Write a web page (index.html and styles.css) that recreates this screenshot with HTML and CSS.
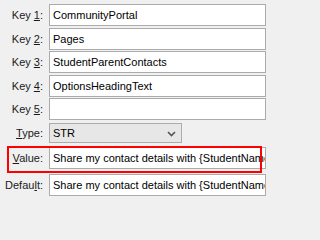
FILE: index.html
```html
<!DOCTYPE html>
<html>
<head>
<meta charset="utf-8">
<link rel="stylesheet" href="styles.css">
</head>
<body>
<div class="form">
  <div class="row r1"><label class="lbl">Key <u>1</u>:</label><div class="field">CommunityPortal</div></div>
  <div class="row"><label class="lbl">Key <u>2</u>:</label><div class="field">Pages</div></div>
  <div class="row"><label class="lbl">Key <u>3</u>:</label><div class="field">StudentParentContacts</div></div>
  <div class="row"><label class="lbl">Key <u>4</u>:</label><div class="field">OptionsHeadingText</div></div>
  <div class="row"><label class="lbl">Key <u>5</u>:</label><div class="field"></div></div>
  <div class="row r-type"><label class="lbl"><u>T</u>ype:</label>
    <div class="select">STR
      <svg class="chev" width="9" height="6" viewBox="0 0 9 6"><path d="M1 1 L4.5 4.5 L8 1" fill="none" stroke="#555" stroke-width="1.6"/></svg>
    </div>
  </div>
  <div class="row r-value"><label class="lbl"><u>V</u>alue:</label><div class="field">Share my contact details with {StudentName}</div></div>
  <div class="row r-default"><label class="lbl">Defau<u>l</u>t:</label><div class="field">Share my contact details with {StudentName}</div></div>
  <div class="highlight"></div>
</div>
</body>
</html>
```

FILE: styles.css
```css
html, body {
  margin: 0;
  padding: 0;
  background: #f0f0f0;
  overflow: hidden;
}
body {
  width: 266px;
  height: 202px;
  font-family: "Liberation Sans", Arial, sans-serif;
  font-size: 11px;
  color: #000;
}
.form {
  position: relative;
  padding-top: 4px;
  width: 266px;
  height: 198px;
}
.row {
  display: flex;
  align-items: center;
  height: 22px;
  margin-bottom: 1.5px;
}
.lbl {
  width: 43px;
  text-align: right;
  flex: none;
  margin-right: 6px;
  color: #1a1a1a;
}
.lbl u {
  text-decoration: underline;
  text-underline-offset: 1px;
}
.field {
  box-sizing: border-box;
  height: 22px;
  width: 217px;
  flex: none;
  border: 1px solid #ababab;
  background: #fff;
  padding: 0 0 0 3px;
  line-height: 20px;
  white-space: nowrap;
  overflow: hidden;
}
.r-type {
  margin-top: 2.5px;
  height: 20px;
  margin-bottom: 4.5px;
}
.select {
  box-sizing: border-box;
  height: 20px;
  width: 133px;
  border: 1px solid #acacac;
  background: #e7e7e7;
  padding-left: 3px;
  line-height: 18px;
  position: relative;
}
.chev {
  position: absolute;
  right: 5px;
  top: 7px;
}
.r-value {
  margin-bottom: 5px;
}
.highlight {
  position: absolute;
  left: 7px;
  top: 146px;
  width: 255px;
  height: 27px;
  box-sizing: border-box;
  border: 2px solid #f00;
}
```
